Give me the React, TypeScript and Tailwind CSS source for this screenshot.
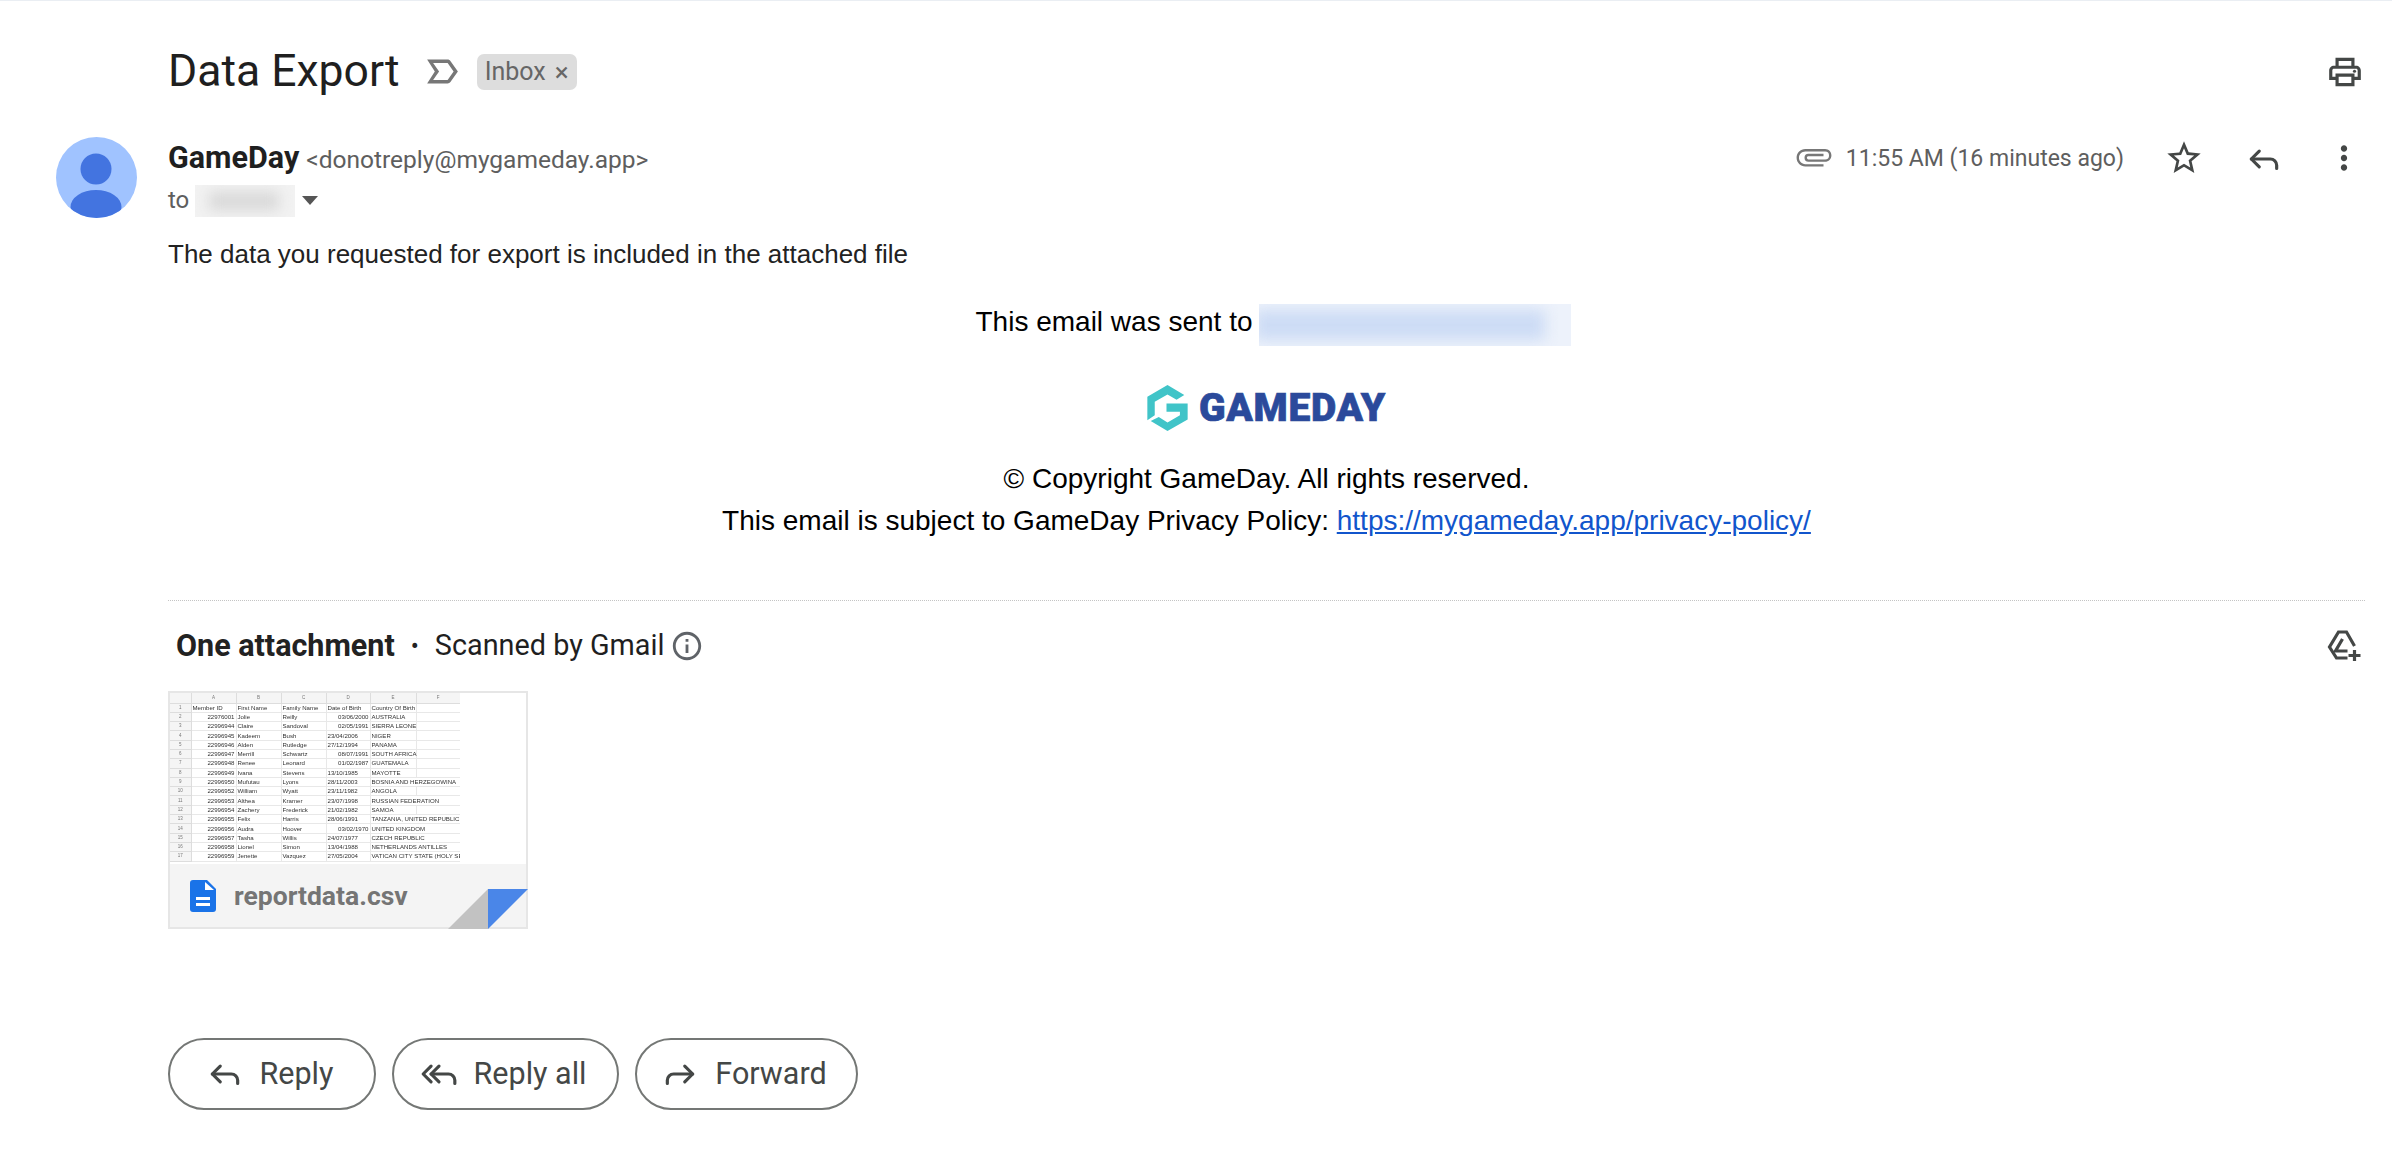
import { MdAttachFile, MdInfoOutline, MdLabelImportantOutline, MdMoreVert, MdOutlinePrint, MdStarBorder } from 'react-icons/md';
import { Reply, ReplyAll, Forward } from 'lucide-react';

type SheetRow = [string, string, string, string, boolean, string];

const rows: SheetRow[] = [
    ['22976001', 'Jolie', 'Reilly', '03/06/2000', true, 'AUSTRALIA'],
    ['22996944', 'Claire', 'Sandoval', '02/05/1991', true, 'SIERRA LEONE'],
    ['22996945', 'Kadeem', 'Bush', '23/04/2006', false, 'NIGER'],
    ['22996946', 'Alden', 'Rutledge', '27/12/1994', false, 'PANAMA'],
    ['22996947', 'Merrill', 'Schwartz', '08/07/1991', true, 'SOUTH AFRICA'],
    ['22996948', 'Renee', 'Leonard', '01/02/1987', true, 'GUATEMALA'],
    ['22996949', 'Ivana', 'Stevens', '13/10/1985', false, 'MAYOTTE'],
    ['22996950', 'Mufutau', 'Lyons', '28/11/2003', false, 'BOSNIA AND HERZEGOWINA'],
    ['22996952', 'William', 'Wyatt', '23/11/1982', false, 'ANGOLA'],
    ['22996953', 'Althea', 'Kramer', '23/07/1998', false, 'RUSSIAN FEDERATION'],
    ['22996954', 'Zachery', 'Frederick', '21/02/1982', false, 'SAMOA'],
    ['22996955', 'Felix', 'Harris', '28/06/1991', false, 'TANZANIA, UNITED REPUBLIC OF'],
    ['22996956', 'Audra', 'Hoover', '03/02/1970', true, 'UNITED KINGDOM'],
    ['22996957', 'Tasha', 'Willis', '24/07/1977', false, 'CZECH REPUBLIC'],
    ['22996958', 'Lionel', 'Simon', '13/04/1988', false, 'NETHERLANDS ANTILLES'],
    ['22996959', 'Jenette', 'Vazquez', '27/05/2004', false, 'VATICAN CITY STATE (HOLY SEE)'],
];

const cell = 'border-r border-b border-[#e8e8e8] px-[1px] whitespace-nowrap';
const headCell = 'border-r border-b border-[#dddddd] bg-[#f5f5f5] text-center text-[#777] text-[4.5px] font-normal';

function Sheet() {
    return (
        <div className="w-[290px] h-[169px] overflow-hidden blur-[0.3px]">
            <table className="w-[290px] table-fixed border-collapse text-[6.1px] leading-[8px] text-[#333] font-['Liberation_Sans',sans-serif]">
                <colgroup>
                    <col className="w-[21px]" />
                    <col className="w-[45px]" />
                    <col className="w-[45px]" />
                    <col className="w-[45px]" />
                    <col className="w-[44px]" />
                    <col className="w-[46px]" />
                    <col className="w-[44px]" />
                </colgroup>
                <thead>
                    <tr className="h-[10px]">
                        {['', 'A', 'B', 'C', 'D', 'E', 'F'].map((h) => (
                            <th key={h} className={headCell}>{h}</th>
                        ))}
                    </tr>
                </thead>
                <tbody>
                    <tr className="h-[9.3px]">
                        <td className={headCell}>1</td>
                        <td className={cell}>Member ID</td>
                        <td className={cell}>First Name</td>
                        <td className={cell}>Family Name</td>
                        <td className={cell}>Date of Birth</td>
                        <td className={cell}>Country Of Birth</td>
                        <td className={cell}></td>
                    </tr>
                    {rows.map((r, i) => {
                        const long = r[5].length > 13;
                        return (
                            <tr key={r[0]} className="h-[9.3px]">
                                <td className={headCell}>{i + 2}</td>
                                <td className={cell + ' text-right'}>{r[0]}</td>
                                <td className={cell}>{r[1]}</td>
                                <td className={cell}>{r[2]}</td>
                                <td className={cell + (r[4] ? ' text-right' : '')}>{r[3]}</td>
                                <td className={cell} colSpan={long ? 2 : 1}>{r[5]}</td>
                                {!long && <td className={cell}></td>}
                            </tr>
                        );
                    })}
                </tbody>
            </table>
        </div>
    );
}

function Blurred({ box, smear }: { box: string; smear: string }) {
    return (
        <span className={`inline-block overflow-hidden align-middle ${box}`}>
            <span className={`block blur-[7px] ${smear}`} />
        </span>
    );
}

function ActionButton({ label, icon, width }: { label: string; icon: React.ReactNode; width: string }) {
    return (
        <button className={`${width} h-[72px] pr-[5px] rounded-[36px] border-2 border-[#747775] flex items-center justify-center gap-[16px] text-[30.5px] text-[#444746] font-['Roboto',sans-serif]`}>
            {icon}
            <span>{label}</span>
        </button>
    );
}

export default function App() {
    return (
        <div className="w-[2392px] h-[1155px] bg-white border-t border-[#eaeef3] overflow-hidden font-['Roboto',sans-serif] text-[#1f1f1f]">
            {/* Subject */}
            <div className="flex items-center h-[69px] mt-[36px] pl-[168px] pr-[28px]">
                <h1 className="text-[44.5px] font-normal leading-none">Data Export</h1>
                <MdLabelImportantOutline className="ml-[22px] w-[41px] h-[41px] text-[#777]" />
                <span className="ml-[14px] h-[36px] w-[100px] rounded-[7px] bg-[#dddddd] flex items-center justify-center gap-[9px] text-[25px] text-[#666]">
                    Inbox <span className="text-[26px] leading-none">×</span>
                </span>
                <MdOutlinePrint className="ml-auto w-[38px] h-[38px] text-[#444746]" />
            </div>

            {/* Message */}
            <div className="flex mt-[32px] pl-[56px] pr-[27px]">
                <svg viewBox="0 0 81 81" className="w-[81px] h-[81px] shrink-0 -mt-[1px]">
                    <defs>
                        <clipPath id="avatar"><circle cx="40.5" cy="40.5" r="40.5" /></clipPath>
                    </defs>
                    <g clipPath="url(#avatar)">
                        <rect width="81" height="81" fill="#a0c3ff" />
                        <circle cx="40" cy="32" r="15.5" fill="#4374e0" />
                        <ellipse cx="40" cy="70" rx="25.5" ry="17" fill="#4374e0" />
                    </g>
                </svg>
                <div className="ml-[31px] flex-1 min-w-0">
                    <div className="flex items-center justify-between h-[40px]">
                        <div className="flex items-baseline gap-[7px]">
                            <span className="text-[30.5px] font-bold">GameDay</span>
                            <span className="text-[24.5px] text-[#5e5e5e]">&lt;donotreply@mygameday.app&gt;</span>
                        </div>
                        <div className="flex items-center">
                            <MdAttachFile className="w-[38px] h-[38px] text-[#777] rotate-90 -mt-[3px]" />
                            <span className="ml-[13px] mt-[2px] text-[23px] text-[#5e5e5e]">11:55 AM (16 minutes ago)</span>
                            <MdStarBorder className="ml-[40px] w-[40px] h-[40px] text-[#444746]" />
                            <Reply className="ml-[41px] mt-[2px] w-[38px] h-[38px] text-[#444746]" strokeWidth={2} />
                            <MdMoreVert className="ml-[42px] mr-[2px] w-[38px] h-[38px] text-[#444746]" />
                        </div>
                    </div>
                    <div className="flex items-center h-[40px] mt-[2px] text-[24px] text-[#5e5e5e]">
                        to
                        <Blurred box="w-[100px] h-[32px] mt-[2px] bg-[#f2f2f2] ml-[6px]" smear="w-[70px] h-[18px] mt-[7px] ml-[14px] bg-[#d8d8d8]" />
                        <span className="ml-[7px] w-0 h-0 border-x-[8px] border-x-transparent border-t-[9px] border-t-[#555]" />
                    </div>

                    <p className="mt-[16px] text-[26px] leading-[36px] text-[#222] font-['Liberation_Sans',sans-serif]">
                        The data you requested for export is included in the attached file
                    </p>

                    {/* Email footer */}
                    <div className="mt-[29px] flex flex-col items-center text-black font-['Liberation_Sans',sans-serif] text-[28px] leading-[42px]">
                        <div className="flex items-start ml-[13px]">
                            This email was sent to
                            <Blurred box="w-[312px] h-[42px] mt-[3px] bg-[#edf2fb] ml-[6px]" smear="w-[290px] h-[30px] mt-[6px] -ml-[4px] bg-[#cddcf5]" />
                        </div>
                        <div className="mt-[39px] flex items-center gap-[11px]">
                            <svg viewBox="0 0 120 137" className="w-[41px] h-[46px]">
                                <polygon fill="#40c4c8" points="60,0 110,30 87,44 60,28 22,50 22,90 0,105 0,35" />
                                <polygon fill="#40c4c8" points="10,107 34,95 60,112 97,90 97,80 57,80 57,55 120,55 120,103 60,137" />
                            </svg>
                            <span className="text-[39px] leading-none font-black text-[#2b4a9b] font-['Roboto',sans-serif] tracking-[0.7px] [-webkit-text-stroke:0.7px_#2b4a9b]">GAMEDAY</span>
                        </div>
                        <div className="mt-[27px]">© Copyright GameDay. All rights reserved.</div>
                        <div>
                            This email is subject to GameDay Privacy Policy: <a className="underline text-[#1155cc]">https://mygameday.app/privacy-policy/</a>
                        </div>
                    </div>
                </div>
            </div>

            {/* Attachments */}
            <div className="ml-[168px] mr-[27px] mt-[58px] border-t border-dotted border-[#c4c4c4]">
                <div className="flex items-center h-[44px] mt-[23px] pl-[8px]">
                    <span className="text-[30.5px] font-bold text-[#222]">One attachment</span>
                    <span className="mx-[16px] text-[24px] leading-none text-[#222]">•</span>
                    <span className="text-[28.8px]">Scanned by Gmail</span>
                    <MdInfoOutline className="ml-[6px] w-[34px] h-[34px] text-[#5f6368]" />
                    <svg viewBox="0 0 34 32" fill="none" stroke="#444746" strokeWidth="3.2" className="ml-auto mr-[3px] w-[35px] h-[32px]">
                        <path d="M20 28H9L2 17 11 2h8l8 14" />
                        <path d="M15 9 8 21h12" />
                        <path d="M27 20v11M21 25.500h12" />
                    </svg>
                </div>

                <div className="relative mt-[23px] w-[360px] h-[238px] border-2 border-[#e6e6e6] bg-white">
                    <Sheet />
                    <div className="mt-[2px] h-[63px] bg-[#f4f4f4] flex items-center pl-[20px] gap-[18px]">
                        <svg viewBox="0 0 26 32" className="w-[26px] h-[32px]">
                            <path fill="#1a73e8" d="M3 0h14l9 9v20a3 3 0 0 1-3 3H3a3 3 0 0 1-3-3V3a3 3 0 0 1 3-3z" />
                            <path fill="#fff" d="M15 2v8h9zM6 17h14v3H6zM6 23h14v3H6z" />
                        </svg>
                        <span className="text-[26.5px] font-bold text-[#757575]">reportdata.csv</span>
                    </div>
                    <svg viewBox="0 0 80 40" className="absolute -right-[2px] -bottom-[2px] w-[80px] h-[40px]">
                        <polygon fill="#c2c2c2" points="0,40 40,0 40,40" />
                        <polygon fill="#4a86e8" points="40,0 80,0 40,40" />
                    </svg>
                </div>

                <div className="flex gap-[16px] mt-[109px]">
                    <ActionButton width="w-[208px]" label="Reply" icon={<Reply className="w-[38px] h-[38px]" strokeWidth={2} />} />
                    <ActionButton width="w-[227px]" label="Reply all" icon={<ReplyAll className="w-[38px] h-[38px]" strokeWidth={2} />} />
                    <ActionButton width="w-[223px]" label="Forward" icon={<Forward className="w-[38px] h-[38px]" strokeWidth={2} />} />
                </div>
            </div>
        </div>
    );
}
